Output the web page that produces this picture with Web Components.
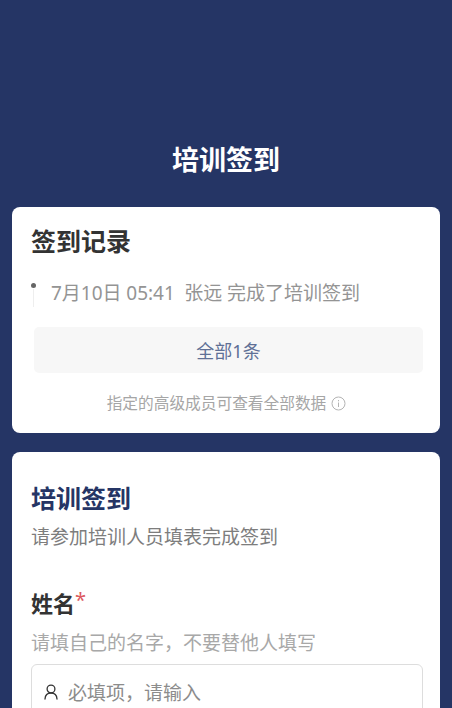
<!DOCTYPE html>
<html lang="zh">
<head>
<meta charset="utf-8">
<title>培训签到</title>
<style>
  html, body { margin: 0; padding: 0; height: 708px; overflow: hidden; background: #253565; }
  body { font-family: "Noto Sans", "Noto Sans CJK SC", sans-serif; }
</style>
</head>
<body>
<sign-page>
  <sign-records slot="records"></sign-records>
  <sign-form slot="form"></sign-form>
</sign-page>

<script>
  class SignPage extends HTMLElement {
    constructor() {
      super();
      this.attachShadow({ mode: "open" }).innerHTML = `
      <style>
        :host { display: block; padding: 0 12px; color: #333; }
        h1 { margin: 0; padding-top: 141px; height: 66px; line-height: 38px; box-sizing: content-box;
             text-align: center; font-size: 27px; font-weight: 700; color: #fff; }
        .stack { display: flex; flex-direction: column; gap: 19px; }
      </style>
      <h1>培训签到</h1>
      <div class="stack">
        <slot name="records"></slot>
        <slot name="form"></slot>
      </div>`;
    }
  }

  class SignRecords extends HTMLElement {
    constructor() {
      super();
      this.attachShadow({ mode: "open" }).innerHTML = `
      <style>
        :host { display: block; background: #fff; border-radius: 8px; height: 226px; box-sizing: border-box; padding: 16px 17px 0 19px; }
        h2 { margin: 0; font-size: 25px; line-height: 36px; font-weight: 700; color: #333; }
        .log { display: flex; margin-top: 20px; height: 48px; }
        .rail { width: 20px; flex: none; display: flex; flex-direction: column; align-items: flex-start; padding: 4px 0 0 0; }
        .dot { width: 5px; height: 5px; border-radius: 50%; background: #666; }
        .line { width: 1px; height: 18px; margin: 1px 0 0 2px; background: #eee; }
        .text { font-size: 19px; line-height: 28px; color: #949494; white-space: pre; word-spacing: -0.25px; }
        .all { margin: 0 0 0 3px; height: 46px; border-radius: 5px; background: #f7f7f7; display: flex; align-items: center; justify-content: center;
               font-size: 18px; color: #5f7096; }
        .note { margin-top: 18px; display: flex; align-items: center; justify-content: center; gap: 5px; padding-right: 1px;
                font-size: 15.7px; line-height: 24px; color: #a6a6a6; }
        svg { display: block; width: 15px; height: 15px; }
      </style>
      <h2>签到记录</h2>
      <div class="log">
        <div class="rail"><span class="dot"></span><span class="line"></span></div>
        <span class="text">7月10日 05:41  张远 完成了培训签到</span>
      </div>
      <div class="all">全部1条</div>
      <div class="note">
        <span>指定的高级成员可查看全部数据</span>
        <svg viewBox="0 0 15 15" fill="none" stroke="#b4b4b4" stroke-width="1">
          <circle cx="7.5" cy="7.5" r="6.5"/>
          <path d="M7.500 6.500v4.500M7.500 4v1.300"/>
        </svg>
      </div>`;
    }
  }

  class SignForm extends HTMLElement {
    constructor() {
      super();
      this.attachShadow({ mode: "open" }).innerHTML = `
      <style>
        :host { display: block; background: #fff; border-radius: 8px; padding: 28px 17px 24px 19px; }
        h2 { margin: 0; font-size: 25px; line-height: 36px; font-weight: 700; color: #253565; }
        p { margin: 4px 0 0; font-size: 19px; line-height: 34px; color: #7d7d7d; }
        .label { margin-top: 33px; font-size: 22px; line-height: 32px; font-weight: 700; color: #333; display: flex; align-items: flex-start; }
        .label i { font-style: normal; color: #dc5a60; font-weight: 400; font-size: 20px; line-height: 26px; }
        .hint { margin-top: 7px; font-size: 19px; line-height: 34px; color: #a8a8a8; }
      </style>
      <h2>培训签到</h2>
      <p>请参加培训人员填表完成签到</p>
      <div class="label">姓名<i>*</i></div>
      <div class="hint">请填自己的名字，不要替他人填写</div>
      <sign-input>必填项，请输入</sign-input>`;
    }
  }

  class SignInput extends HTMLElement {
    constructor() {
      super();
      this.attachShadow({ mode: "open" }).innerHTML = `
      <style>
        :host { display: flex; align-items: center; gap: 10px; margin-top: 4px; height: 56px; box-sizing: border-box;
                padding: 0 12px; border: 1px solid #ddd; border-radius: 6px;
                font-size: 19px; color: #8c8c8c; }
        svg { width: 14px; height: 16px; flex: none; }
      </style>
      <svg viewBox="0 0 14 16" fill="none" stroke="#333" stroke-width="1.3" stroke-linecap="round">
        <circle cx="7" cy="5" r="3.9"/>
        <path d="M1 15c.2-3.600 2.600-6 6-6s5.800 2.400 6 6"/>
      </svg>
      <span><slot></slot></span>`;
    }
  }

  customElements.define("sign-page", SignPage);
  customElements.define("sign-records", SignRecords);
  customElements.define("sign-form", SignForm);
  customElements.define("sign-input", SignInput);
</script>
</body>
</html>
